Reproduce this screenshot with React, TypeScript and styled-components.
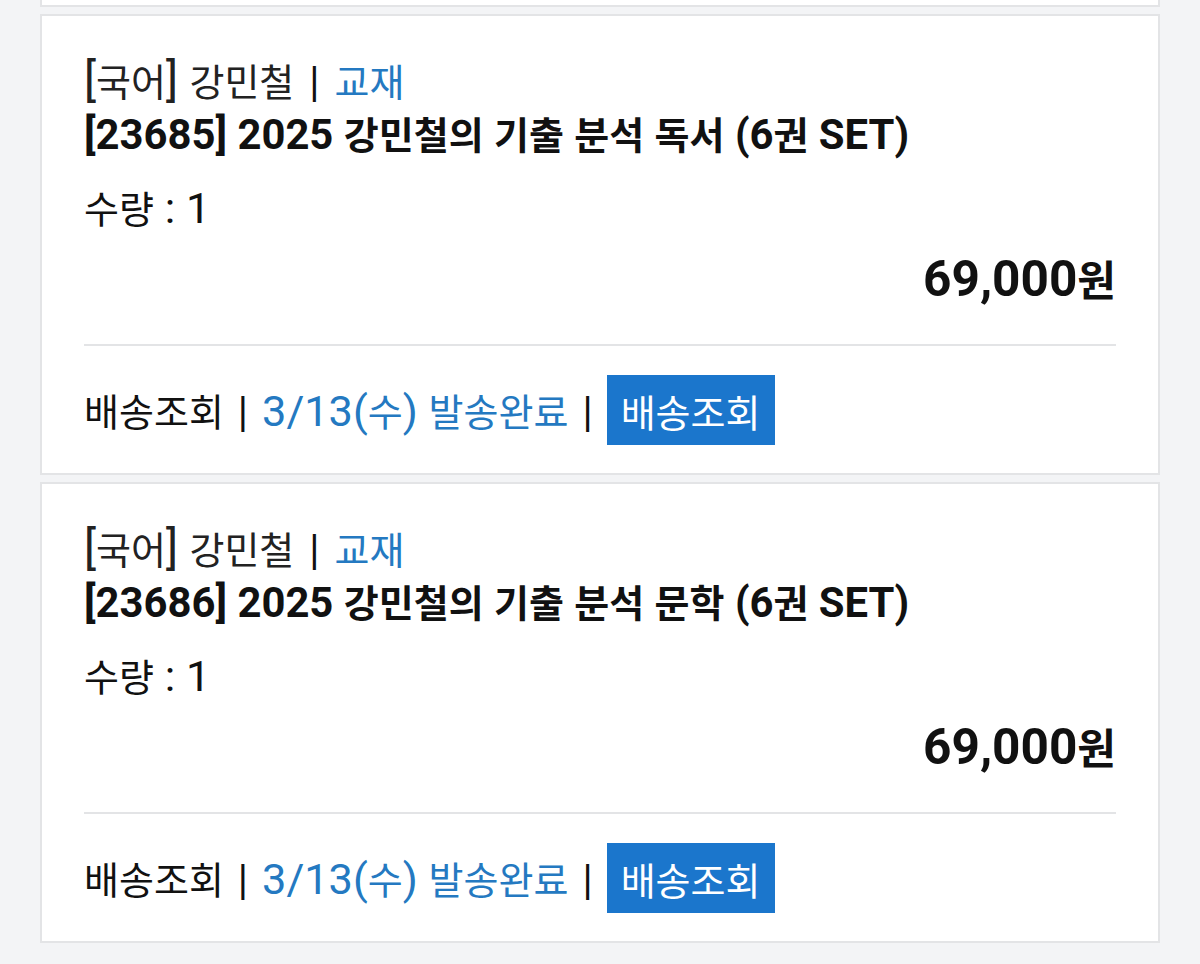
import React from 'react';
import styled, { createGlobalStyle } from 'styled-components';

const GlobalStyle = createGlobalStyle`
  html, body {
    margin: 0;
    padding: 0;
    background: #f3f4f6;
  }
  body {
    font-family: 'Noto Sans CJK KR', 'Noto Sans', sans-serif;
    color: #111;
  }
`;

type Order = {
  category: string;
  teacher: string;
  kind: string;
  code: string;
  title: string;
  qty: number;
  price: string;
  shipDate: string;
};

const orders: Order[] = [
  {
    category: '국어',
    teacher: '강민철',
    kind: '교재',
    code: '23685',
    title: '2025 강민철의 기출 분석 독서 (6권 SET)',
    qty: 1,
    price: '69,000원',
    shipDate: '3/13(수) 발송완료',
  },
  {
    category: '국어',
    teacher: '강민철',
    kind: '교재',
    code: '23686',
    title: '2025 강민철의 기출 분석 문학 (6권 SET)',
    qty: 1,
    price: '69,000원',
    shipDate: '3/13(수) 발송완료',
  },
];

// the phone font draws latin/digits noticeably bigger than hangul,
// so latin runs get their own span
const HANGUL = /([\u1100-\u11ff\u3130-\u318f\uac00-\ud7a3]+)/;

const Mixed = ({ text }: { text: string }) => (
  <>
    {text.split(HANGUL).map((part, i) =>
      !part ? null : HANGUL.test(part) ? (
        <span key={i}>{part}</span>
      ) : (
        <Latin key={i}>{part}</Latin>
      )
    )}
  </>
);

export default function App() {
  return (
    <>
      <GlobalStyle />
      <Page>
        <CardTail />
        {orders.map((o) => (
          <OrderCard key={o.code}>
            <Meta>
              <Mixed text={`[${o.category}] ${o.teacher}`} />
              <Sep>|</Sep>
              <Blue>{o.kind}</Blue>
            </Meta>
            <Title>
              <Mixed text={`[${o.code}] ${o.title}`} />
            </Title>
            <Qty>
              <Mixed text={`수량 : ${o.qty}`} />
            </Qty>
            <Price>
              <Mixed text={o.price} />
            </Price>
            <Divider />
            <Footer>
              <FooterText>
                <span>배송조회</span>
                <Sep>|</Sep>
                <Blue>
                  <Mixed text={o.shipDate} />
                </Blue>
                <Sep>|</Sep>
              </FooterText>
              <TrackButton type="button">배송조회</TrackButton>
            </Footer>
          </OrderCard>
        ))}
      </Page>
    </>
  );
}

const Page = styled.div`
  width: 1120px;
  margin: 0 auto;
  display: flex;
  flex-direction: column;
  gap: 7px;
  padding-bottom: 22px;
`;

const CardTail = styled.div`
  height: 5px;
  background: #fff;
  border: 2px solid #e3e4e6;
  border-top: none;
`;

const OrderCard = styled.section`
  background: #fff;
  border: 2px solid #e3e4e6;
  padding: 38px 42px 28px;
  display: flex;
  flex-direction: column;
`;

const Latin = styled.span`
  font-family: Roboto, 'Noto Sans', sans-serif;
  font-size: 1.14em;
  line-height: 0;
`;

const Sep = styled.span`
  font-family: Roboto, 'Noto Sans', sans-serif;
  font-size: 1.1em;
  line-height: 0;
  color: #111;
  margin: 0 14px;
`;

const Meta = styled.div`
  font-size: 38px;
  line-height: 52px;
  color: #222;
  white-space: pre;

  ${Latin} {
    font-size: 1.2em;
  }
  ${Sep} {
    margin: 0 15px;
  }
`;

const Blue = styled.span`
  color: #2479c1;
`;

const Title = styled.div`
  font-size: 38px;
  font-weight: 700;
  line-height: 54px;
  color: #111;
  white-space: pre;

  ${Latin} {
    font-size: 1.1em;
  }
`;

const Qty = styled.div`
  font-size: 38px;
  line-height: 54px;
  margin-top: 20px;
  color: #111;
`;

const Price = styled.div`
  font-size: 42px;
  font-weight: 700;
  line-height: 56px;
  margin-top: 16px;
  text-align: right;
  color: #111;

  ${Latin} {
    font-size: 1.18em;
  }
`;

const Divider = styled.div`
  height: 2px;
  background: #e3e4e6;
  margin-top: 38px;
`;

const Footer = styled.div`
  margin-top: 29px;
  display: flex;
  align-items: center;
`;

const FooterText = styled.span`
  font-size: 38px;
  line-height: 52px;
  color: #111;
  white-space: pre;
`;

const TrackButton = styled.button`
  height: 70px;
  padding: 0 14px;
  border: none;
  background: #1b76cc;
  color: #fff;
  font-family: inherit;
  font-size: 38px;
`;
